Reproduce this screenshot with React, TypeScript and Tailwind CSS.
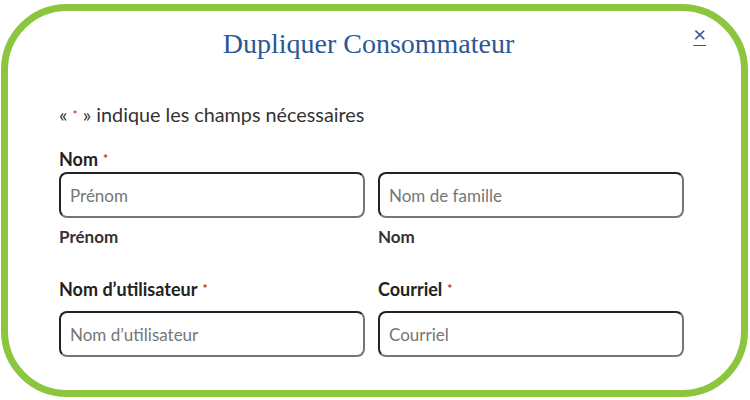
export default function App() {
  const lato = { fontFamily: 'Lato, "Noto Sans", sans-serif' }

  return (
    <div className="h-[400px] w-[750px] bg-white" style={lato}>
      <div className="relative ml-[1px] h-[397px] w-[747px] pt-[4px]">
        <div className="relative h-[393px] w-[747px] overflow-hidden rounded-[66px] border-[7px] border-[#8cc63f] bg-white pl-[51px] pr-[57px]">
          <button className="absolute right-[35px] top-[9px] text-[22px] leading-[28px] text-[#2b5797] underline decoration-1 underline-offset-[3px]">
            ×
          </button>
          <h1
            className="pt-[16px] pr-[6px] text-center text-[28px] leading-[34px] text-[#2b5797]"
            style={{ fontFamily: '"Liberation Serif", "Times New Roman", serif' }}
          >
            Dupliquer Consommateur
          </h1>

          <p className="mt-[40px] h-[27px] text-[19.8px] leading-[27px] text-[#333]">
            « <span className="relative top-[8px] align-top text-[12px] leading-none text-[#c02b0a]">*</span> » indique les champs nécessaires
          </p>

          <div className="mt-[19px]">
            <Label text="Nom" />
            <div className="mt-[1px] grid grid-cols-2 gap-[13px]">
              <div>
                <Input placeholder="Prénom" />
                <div className="mt-[8px] text-[17px] font-bold leading-[22px] text-[#333]">Prénom</div>
              </div>
              <div>
                <Input placeholder="Nom de famille" />
                <div className="mt-[8px] text-[17px] font-bold leading-[22px] text-[#333]">Nom</div>
              </div>
            </div>
          </div>

          <div className="mt-[29px] grid grid-cols-2 gap-[13px]">
            <div>
              <Label text="Nom d’utilisateur" />
              <div className="mt-[10px]">
                <Input placeholder="Nom d’utilisateur" />
              </div>
            </div>
            <div>
              <Label text="Courriel" />
              <div className="mt-[10px]">
                <Input placeholder="Courriel" />
              </div>
            </div>
          </div>
        </div>
      </div>
    </div>
  )
}

function Label({ text }: { text: string }) {
  return (
    <div className="h-[24px] text-[18px] font-bold leading-[24px] text-[#222]">
      {text}
      <span className="relative top-[6px] ml-[5px] align-top text-[12px] leading-none text-[#c02b0a]">*</span>
    </div>
  )
}

function Input({ placeholder }: { placeholder: string }) {
  return (
    <input
      type="text"
      placeholder={placeholder}
      className="block h-[46px] w-full rounded-[8px] border-2 border-b-[#767676] border-l-[#222] border-r-[#767676] border-t-[#222] bg-white px-[9px] text-[17px] text-[#333] outline-none placeholder:text-[#767676]"
    />
  )
}
